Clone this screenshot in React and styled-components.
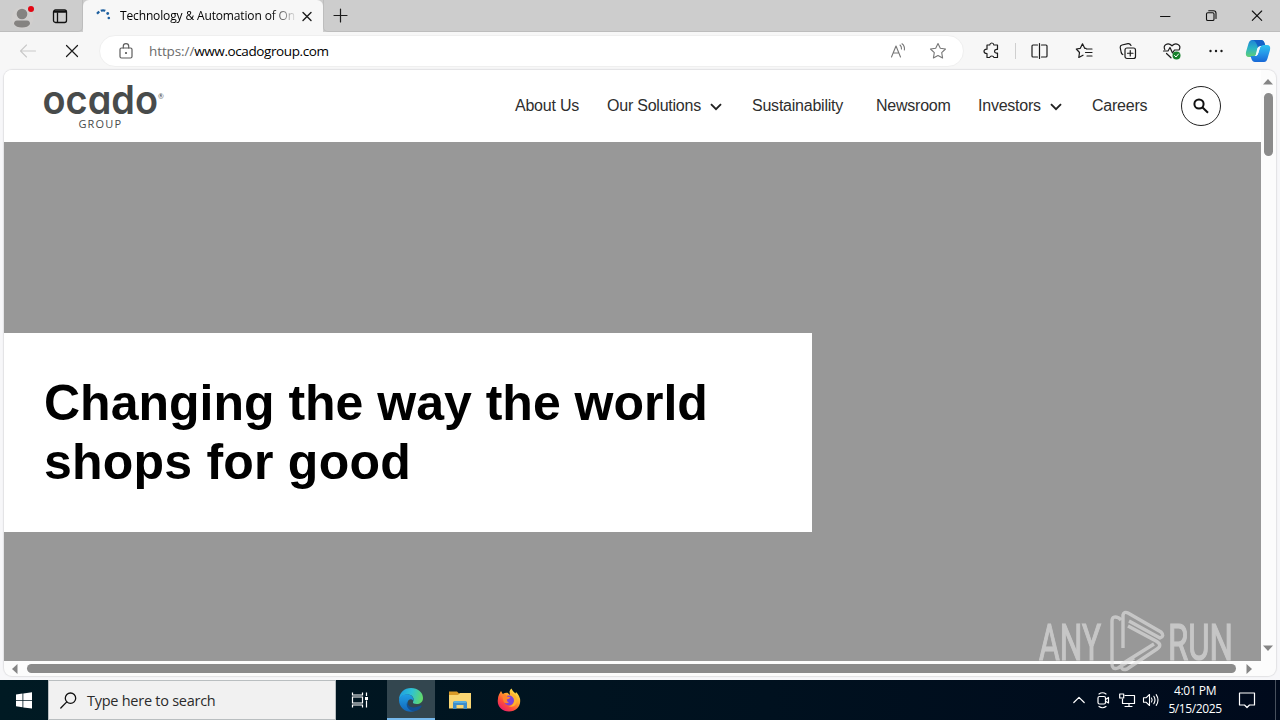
import React from "react";
import styled, { createGlobalStyle } from "styled-components";

const GlobalStyle = createGlobalStyle`
  * {
    box-sizing: border-box;
  }

  body {
    margin: 0;
    overflow: hidden;
    background: #f7f7f7;
    font-family: "Open Sans", "Noto Sans", sans-serif;
  }

  svg {
    display: block;
    flex: none;
    overflow: visible;
  }
`;

const DesktopSC = styled.div`
  width: 1280px;
  height: 720px;
  display: flex;
  flex-direction: column;
  position: relative;
  overflow: hidden;
`;

const TabStripSC = styled.div`
  height: 32px;
  display: flex;
  background: #cdcdcd;
`;

const CellSC = styled.div`
  width: ${(props) => props.$w}px;
  height: 100%;
  flex: none;
  display: flex;
  align-items: center;
  justify-content: center;
`;

const StripStartSC = styled.div`
  width: 83px;
  display: flex;
  padding-left: 3px;
  border-bottom: 1px solid #bdbdbd;
  border-right: 1px solid #bdbdbd;
  border-bottom-right-radius: 5px;
`;

const TabSC = styled.div`
  width: 240px;
  display: flex;
  align-items: center;
  padding-left: 13px;
  background: #f7f7f7;
  border-radius: 6px 6px 0 0;
`;

const TabTitleSC = styled.div`
  width: 175px;
  margin-left: 9px;
  white-space: nowrap;
  font-size: 12px;
  line-height: 20px;
  letter-spacing: -0.14px;
  color: #000;
  mask-image: linear-gradient(to right, #000 150px, transparent 178px);
`;

const StripEndSC = styled.div`
  flex: 1;
  display: flex;
  border-bottom: 1px solid #bdbdbd;
  border-left: 1px solid #bdbdbd;
  border-bottom-left-radius: 5px;
`;

const SpacerSC = styled.div`
  flex: 1;
`;

const ToolbarSC = styled.div`
  height: 38px;
  display: flex;
  align-items: center;
  padding-left: 6px;
  background: #f7f7f7;
`;

const AddressSC = styled.div`
  width: 865px;
  height: 32px;
  margin: 0 3px 0 5px;
  padding: 0 5px 0 7px;
  display: flex;
  align-items: center;
  border-radius: 16px;
  border: 1px solid #efefef;
  background: #fff;
`;

const UrlSC = styled.div`
  flex: 1;
  margin-left: 4px;
  font-size: 13.5px;
  line-height: 20px;
  letter-spacing: -0.4px;
  color: #000;

  span {
    color: #6b6b6b;
    letter-spacing: -0.1px;
  }
`;

const SeparatorSC = styled.div`
  width: 1px;
  height: 16px;
  background: #cfcfcf;
`;

const WindowBodySC = styled.div`
  height: 610px;
  padding: 0 4px 4px;
  background: #f7f7f9;
`;

const PageFrameSC = styled.div`
  height: 606px;
  display: grid;
  grid-template-columns: 1257px 15px;
  grid-template-rows: 591px 15px;
  overflow: hidden;
  border-radius: 8px;
  background: #fcfcfc;
  box-shadow: 0 0 1px 1px #e2e2e4;
`;

const SiteSC = styled.div`
  display: flex;
  flex-direction: column;
  background: #fff;
`;

const SiteHeaderSC = styled.header`
  height: 72px;
  display: flex;
  align-items: center;
  padding: 0 40px;
`;

const NavSC = styled.nav`
  flex: 1;
  display: flex;
  align-items: center;
  margin-left: 347px;
`;

const NavItemSC = styled.div`
  width: ${(props) => props.$w}px;
  flex: none;
  display: flex;
  align-items: center;
  white-space: nowrap;
  font: 16px/24px "Liberation Sans", Arial, sans-serif;
  letter-spacing: -0.23px;
  color: #2e2e2e;

  svg {
    margin-left: 9px;
    margin-top: 2px;
  }
`;

const SearchButtonSC = styled.div`
  width: 40px;
  height: 40px;
  display: flex;
  align-items: center;
  justify-content: center;
  border: 1px solid #222;
  border-radius: 50%;
`;

const HeroSC = styled.div`
  flex: 1;
  padding-top: 191px;
  background: #989898;
`;

const HeroCardSC = styled.div`
  width: 808px;
  height: 199px;
  padding: 41px 40px 0;
  background: #fff;
`;

const HeroTitleSC = styled.h1`
  margin: 0;
  font: bold 50px/59px "Liberation Sans", Arial, sans-serif;
  color: #000;

  span {
    letter-spacing: 0.22px;
  }
`;

const VerticalBarSC = styled.div`
  display: flex;
  flex-direction: column;
  align-items: center;
  justify-content: space-between;
  padding: 9px 1px 10px 0;
`;

const HorizontalBarSC = styled.div`
  display: flex;
  align-items: center;
  padding: 0 9px 0 8px;
  gap: 9px;
`;

const VerticalThumbSC = styled.div`
  width: 9px;
  height: 63px;
  margin: 8px 0 auto;
  border-radius: 5px;
  background: #8b8b8b;
`;

const HorizontalThumbSC = styled.div`
  flex: 1;
  height: 9px;
  margin-right: 1px;
  border-radius: 5px;
  background: #8b8b8b;
`;

const TaskbarSC = styled.div`
  height: 40px;
  display: flex;
  background: linear-gradient(to right, #001a23, #00111f 60%, #000a1c);
  color: #fff;
`;

const SearchBoxSC = styled.div`
  width: 288px;
  display: flex;
  align-items: center;
  padding-left: 11px;
  gap: 10px;
  background: #f1f1f1;
  border: 1px solid #b9bec0;
  color: #2b2b2b;
  font-size: 14.5px;
  letter-spacing: -0.26px;
`;

const TaskButtonSC = styled(CellSC)`
  width: 48px;
  margin-right: 1px;
  padding-top: 1px;
  background: ${(props) => (props.$active ? "#33464f" : "transparent")};
  border-bottom: 2px solid ${(props) => (props.$active ? "#76b9ed" : "transparent")};
`;

const ClockSC = styled.div`
  width: 64px;
  padding-top: 2px;
  text-align: center;
  font-size: 12px;
  line-height: 18px;
  letter-spacing: -0.4px;
  white-space: nowrap;
`;

const ShowDesktopSC = styled.div`
  width: 5px;
  border-left: 1px solid #47505d;
`;

const WatermarkSC = styled.div`
  position: absolute;
  left: 1036px;
  top: 606px;
  opacity: 0.6;
`;

const Icon = ({ size = 20, box = 20, color = "#1b1b1b", sw = 1.1, children }) => (
  <svg
    width={size}
    height={size}
    viewBox={`0 0 ${box} ${box}`}
    fill="none"
    stroke={color}
    strokeWidth={sw}
    strokeLinecap="round"
    strokeLinejoin="round"
  >
    {children}
  </svg>
);

const Arrow = ({ d, w, h }) => (
  <svg width={w} height={h} viewBox={`0 0 ${w} ${h}`}>
    <path d={d} fill="#858585" />
  </svg>
);

const Chevron = () => (
  <svg width="12" height="8" viewBox="0 0 12 8" fill="none" stroke="#222" strokeWidth="1.900">
    <path d="M1 1.200 6 6.200 11 1.200" />
  </svg>
);

const STAR = "M10 2.5 12.3 7.3 17.5 8 13.7 11.7 14.6 17 10 14.5 5.4 17 6.3 11.7 2.5 8 7.7 7.3Z";

// cv11 gives Inter its single-storey "a"
const OcadoLogo = () => (
  <svg width="124" height="50" viewBox="0 0 124 50" fill="#484b4b">
    <text
      x="-1.500"
      y="32.500"
      fontFamily="Inter"
      fontWeight="600"
      fontSize="39.500"
      textLength="115.500"
      lengthAdjust="spacingAndGlyphs"
      style={{ fontFeatureSettings: '"cv11"' }}
    >
      ocado
    </text>
    <text x="114" y="17.500" fontFamily="Lato" fontSize="7">
      ®
    </text>
    <text x="34.500" y="46.500" fontFamily="Open Sans" fontSize="11" textLength="42.500">
      GROUP
    </text>
  </svg>
);

const CopilotIcon = () => (
  <svg width="26" height="24" viewBox="0 0 26 24">
    <defs>
      <linearGradient id="cpA" x1="0" y1="0" x2="0" y2="1">
        <stop offset="0" stopColor="#1f84d6" />
        <stop offset=".5" stopColor="#2bb5c4" />
        <stop offset="1" stopColor="#62cf73" />
      </linearGradient>
      <linearGradient id="cpB" x1="0" y1="0" x2="0" y2="1">
        <stop offset="0" stopColor="#2cc3ef" />
        <stop offset=".5" stopColor="#2596e8" />
        <stop offset="1" stopColor="#1767d6" />
      </linearGradient>
    </defs>
    <path d="M7 1H16Q18.500 1 19.500 4L20.500 7H16Q13.500 7 12.700 10L11 15.500Q10.200 18 7.500 18H4Q0 18 1 13L3.500 4.500Q4.500 1 7 1Z" fill="url(#cpA)" />
    <path d="M7 1H16Q18.500 1 19.500 4L20.500 7H16Q14 7 13 9Q11 1 7 1Z" fill="#1462c7" />
    <path d="M19 23H10Q7.500 23 6.500 20L5.500 17H10Q12.500 17 13.300 14L15 8.500Q15.800 6 18.500 6H22Q26 6 25 11L22.500 19.500Q21.500 23 19 23Z" fill="url(#cpB)" />
    <path d="M12.200 9.500Q13 7 16 7H16.500Q15.300 7.500 15 8.500L13.300 14Q12.500 17 10 17H9.500Q10.600 16.500 11 15.500Z" fill="#f4fbff" />
  </svg>
);

const EdgeIcon = () => (
  <svg width="26" height="26" viewBox="0 0 26 26">
    <defs>
      <linearGradient id="edA" x1="0" y1=".3" x2="1" y2=".5">
        <stop offset="0" stopColor="#1e9de0" />
        <stop offset=".5" stopColor="#2fc2d4" />
        <stop offset="1" stopColor="#62d968" />
      </linearGradient>
      <linearGradient id="edB" x1="0" y1="0" x2="0" y2="1">
        <stop offset="0" stopColor="#209fe5" />
        <stop offset="1" stopColor="#1265b9" />
      </linearGradient>
    </defs>
    <path d="M1 13C1 5.500 6.500 1 13 1C20 1 25 5.500 25 11C25 15 22 17 18.700 17C16 17 14.500 16 15 15C16 13.700 16.300 9 11.500 7.800C7 6.700 2.500 9 1 13Z" fill="url(#edA)" />
    <path d="M1 13C1.500 9.500 5 7 9 7.200C14 7.500 16 11 15.500 14C14 11.500 11 11.500 9.800 14.500C8.500 19 12 24 17.500 23.800C10 27 1 22 1 13Z" fill="url(#edB)" />
    <path d="M9.500 14.500C9 19.500 14.500 22.500 22.800 18.600C24 18 23.800 19.200 23.200 20C21 23.300 18.500 24.200 15.500 24.200C10 23.500 7.200 18 9.500 14.500Z" fill="#124f92" />
  </svg>
);

const FolderIcon = () => (
  <svg width="22" height="20" viewBox="0 0 22 20">
    <path d="M0 1.500H8L10 3.500H21V8H0Z" fill="#d99a27" />
    <path d="M0 5H9L11 3H22V18.500H0Z" fill="#f9d673" />
    <path d="M4 19V13Q4 11 6 11H16Q18 11 18 13V19H14.500V15H7.500V19Z" fill="#3d8ecb" />
    <path d="M5 11H17V13H5Z" fill="#58afe0" />
  </svg>
);

const FirefoxIcon = () => (
  <svg width="24" height="24" viewBox="0 0 24 24">
    <defs>
      <linearGradient id="ffA" x1=".85" y1=".05" x2=".2" y2=".95">
        <stop offset="0" stopColor="#ffe94a" />
        <stop offset=".4" stopColor="#ffa22c" />
        <stop offset=".7" stopColor="#ff5038" />
        <stop offset="1" stopColor="#e91d6a" />
      </linearGradient>
    </defs>
    <path d="M2 6.500L4 3L5.800 6Q8 4.500 10.500 4.800L13 7L12.500 3.500Q13 1.500 14.500 .5Q15.500 3.500 18.500 5.500L19 4Q23.200 8 23.200 13C23.200 19 18.500 23.500 12 23.500C5.500 23.500 .7 19 .7 13Q.7 9 2 6.500Z" fill="url(#ffA)" />
    <circle cx="12" cy="12.500" r="5" fill="#7c43d9" />
    <path d="M5.800 6Q9 6 10.500 8.700L13.500 9.200Q12.500 11 10 11.200Q9.500 13.500 12 14.500Q9.500 16 7 14.500Q5 10 5.800 6Z" fill="#ff842c" />
    <path d="M13 6Q18 8 17 14Q15.500 18.500 10.500 17.800Q18.500 21 20 13Q20 7.500 14.500 5Z" fill="#ffb12d" />
  </svg>
);

const AnyRunMark = () => (
  <svg width="200" height="70" viewBox="0 0 200 70" fill="#e6e6e6">
    <g fontFamily="Roboto" fontSize="50" stroke="#e6e6e6" strokeWidth="1.200">
      <text x="3" y="53.500" textLength="62" lengthAdjust="spacingAndGlyphs">
        ANY
      </text>
      <text x="132" y="53.500" textLength="65" lengthAdjust="spacingAndGlyphs">
        RUN
      </text>
    </g>
    <path
      d="M85 14 83 12Q76 9 76 15V58Q76 64 82 62L98 52M87 42V9Q88 5 92 7L125 26Q129 30 124 32L93 15M92 20 120 35Q127 39 121 43L91 63Q84 65 86 58L118 38"
      fill="none"
      stroke="#e6e6e6"
      strokeWidth="3.400"
      strokeLinejoin="round"
    />
  </svg>
);

const TabStrip = () => (
  <TabStripSC>
    <StripStartSC>
      <CellSC $w={40}>
        <svg width="24" height="28" viewBox="0 0 24 28">
          <circle cx="11.500" cy="16" r="11" fill="#d1cfce" />
          <circle cx="11" cy="12" r="5.300" fill="#858381" />
          <path d="M3 22Q3 18.500 6 18.500H16Q19 18.500 19 22Q17 25.500 11 25.500T3 22Z" fill="#858381" />
          <circle cx="20" cy="7" r="3" fill="#e30613" />
        </svg>
      </CellSC>
      <CellSC $w={34}>
        <Icon size={16} box={16} color="#111" sw={1.3}>
          <rect x="1.500" y="2" width="13" height="12.500" rx="2" />
          <path d="M2.500 3.800H13.500" strokeWidth="2" />
          <path d="M5.500 5V14" />
        </Icon>
      </CellSC>
    </StripStartSC>
    <TabSC>
      <svg width="15" height="15" viewBox="0 0 15 15" fill="none" stroke="#1d5f9f" strokeWidth="2.300">
        <path d="M1 4.800 3.200 2.500M4.800 1.800Q7 .8 9.300 1.800" />
        <g fill="#1d5f9f" stroke="none">
          <circle cx="11.700" cy="4.500" r="1.400" />
          <circle cx="12.800" cy="9" r="1.300" />
        </g>
      </svg>
      <TabTitleSC>Technology &amp; Automation of On</TabTitleSC>
      <CellSC $w={24}>
        <Icon size={10} box={10} sw={1.4}>
          <path d="M1 1.500 9 9.500M9 1.500 1 9.500" />
        </Icon>
      </CellSC>
    </TabSC>
    <StripEndSC>
      <CellSC $w={33}>
        <Icon size={15} box={15} sw={1.2}>
          <path d="M7.500 1V14M1 7.500H14" />
        </Icon>
      </CellSC>
      <SpacerSC />
      <CellSC $w={46}>
        <Icon size={11} box={11} color="#111" sw={1}>
          <path d="M.5 6.500H10" />
        </Icon>
      </CellSC>
      <CellSC $w={46}>
        <Icon size={11} box={11} color="#111" sw={1.1}>
          <rect x=".5" y="2.800" width="7.500" height="7.700" rx="1.300" />
          <path d="M2.700 .8H7.500Q10 .8 10 3.200V8.500" />
        </Icon>
      </CellSC>
      <CellSC $w={46}>
        <Icon size={11} box={11} color="#111" sw={1.1}>
          <path d="M.3 1 9.700 10.400M9.700 1 .3 10.400" />
        </Icon>
      </CellSC>
    </StripEndSC>
  </TabStripSC>
);

const Toolbar = () => (
  <ToolbarSC>
    <CellSC $w={44}>
      <Icon color="#c9c9c9">
        <path d="M17.500 10H2.500M8.500 4 2.500 10 8.500 16" />
      </Icon>
    </CellSC>
    <CellSC $w={44}>
      <Icon size={14} box={14} sw={1.2}>
        <path d="M1.500 1.500 12.500 12.500M12.500 1.500 1.500 12.500" />
      </Icon>
    </CellSC>
    <AddressSC>
      <CellSC $w={38}>
        <Icon color="#5d5d5d" sw={1.2}>
          <rect x="4" y="7" width="12" height="10" rx="1.500" />
          <path d="M7.300 7V5.300A2.700 2.700 0 0 1 12.700 5.300V7" />
          <circle cx="10" cy="12" r=".5" fill="#5d5d5d" />
        </Icon>
      </CellSC>
      <UrlSC>
        <span>https://</span>www.ocadogroup.com
      </UrlSC>
      <CellSC $w={40}>
        <Icon color="#777" sw={1.1}>
          <path d="M3.500 16 8 5 12.500 16M5.100 12H10.900" />
          <path d="M12 4Q13.700 5.500 13.500 8M14 2.800Q17 5 16.400 9" />
        </Icon>
      </CellSC>
      <CellSC $w={40}>
        <Icon color="#777">
          <path d={STAR} />
        </Icon>
      </CellSC>
    </AddressSC>
    <CellSC $w={48}>
      <Icon sw={1.2}>
        <path d="M6 4H8.700Q9 2 10.800 2T12.900 4H16.500V8.300H15.500Q13.500 8.500 13.500 10.200T15.500 12.100H16.500V16.500H12.900Q12.600 15 10.800 15T8.700 16.500H6V12.500Q3 12.500 3 10.300T6 8.200Z" />
      </Icon>
    </CellSC>
    <SeparatorSC />
    <CellSC $w={46}>
      <Icon sw={1.2}>
        <path d="M8.500 4H4Q3 4 3 5V15Q3 16 4 16H8.500M12.500 4H17Q18 4 18 5V15Q18 16 17 16H12.500M10.500 2.500V17.500" />
      </Icon>
    </CellSC>
    <CellSC $w={44}>
      <Icon sw={1.2}>
        <path d="M12 7.300H10.700L8.500 2.800 6.300 7.300 2.300 8 5.500 11.500 4.800 16.500 9 14.200M12.500 8H18M11.500 11.500H18M13 15H18" />
      </Icon>
    </CellSC>
    <CellSC $w={44}>
      <Icon sw={1.2}>
        <rect x="7" y="7" width="10.500" height="10.500" rx="2" />
        <path d="M12.250 9.500V15M9.500 12.250H15M4.800 13.500Q3.500 12.800 3.200 11.500L2.200 6.500Q2 4.500 4 4L10 2.600Q12 2.300 13 4.500" />
      </Icon>
    </CellSC>
    <CellSC $w={44}>
      <Icon sw={1.2}>
        <path d="M2.800 8.500C.3 4 6 1 10 4.800C14 1 19.500 4 17.300 8.500M1.500 10H6L8 6.500 10.500 12 12.500 9H17M4.500 12.500 9 16.800" />
        <circle cx="14.500" cy="14.500" r="4" fill="#16802b" stroke="none" />
        <path d="M12.500 14.500 14 16 16.500 13" stroke="#fff" strokeWidth="1" />
      </Icon>
    </CellSC>
    <CellSC $w={44}>
      <Icon>
        <g fill="#1b1b1b" stroke="none">
          <circle cx="4.500" cy="10" r="1.200" />
          <circle cx="10" cy="10" r="1.200" />
          <circle cx="15.500" cy="10" r="1.200" />
        </g>
      </Icon>
    </CellSC>
    <CellSC $w={40}>
      <CopilotIcon />
    </CellSC>
  </ToolbarSC>
);

const Site = () => (
  <SiteSC>
    <SiteHeaderSC>
      <OcadoLogo />
      <NavSC>
        <NavItemSC $w={92}>About Us</NavItemSC>
        <NavItemSC $w={145}>
          Our Solutions <Chevron />
        </NavItemSC>
        <NavItemSC $w={124}>Sustainability</NavItemSC>
        <NavItemSC $w={102}>Newsroom</NavItemSC>
        <NavItemSC $w={114}>
          Investors <Chevron />
        </NavItemSC>
        <NavItemSC $w={57}>Careers</NavItemSC>
      </NavSC>
      <SearchButtonSC>
        <svg width="16" height="16" viewBox="0 0 16 16" fill="none" stroke="#111" strokeWidth="2">
          <circle cx="6" cy="6" r="4.600" />
          <path d="M9.300 9.300 15 14.800" />
        </svg>
      </SearchButtonSC>
    </SiteHeaderSC>
    <HeroSC>
      <HeroCardSC>
        <HeroTitleSC>
          Changing the way the world
          <br />
          <span>shops for good</span>
        </HeroTitleSC>
      </HeroCardSC>
    </HeroSC>
  </SiteSC>
);

const Taskbar = () => (
  <TaskbarSC>
    <CellSC $w={48}>
      <svg width="16" height="17" viewBox="0 0 16 17" fill="#fff">
        <path d="M0 2.500 6.500 1.600V8H0ZM7.300 1.500 16 .2V8H7.300ZM0 8.800H6.500V15.200L0 14.300ZM7.300 8.800H16V16.600L7.300 15.400Z" />
      </svg>
    </CellSC>
    <SearchBoxSC>
      <Icon size={17} box={17} color="#111" sw={1.3}>
        <circle cx="10.500" cy="6.200" r="5.200" />
        <path d="M6.800 9.900 .8 16" />
      </Icon>
      Type here to search
    </SearchBoxSC>
    <CellSC $w={51}>
      <svg width="21" height="16" viewBox="0 0 21 16" fill="none" stroke="#fff" strokeWidth="1.200">
        <path d="M1.500 .5V3H11.500V.5M1.500 15.500V13H11.500V15.500M1.500 5H11.500V11H1.500ZM15.500 .5V4M15.500 8.500V15.500" />
        <path d="M14 5H17V8H14Z" fill="#fff" stroke="none" />
      </svg>
    </CellSC>
    <TaskButtonSC $active>
      <EdgeIcon />
    </TaskButtonSC>
    <TaskButtonSC>
      <FolderIcon />
    </TaskButtonSC>
    <TaskButtonSC>
      <FirefoxIcon />
    </TaskButtonSC>
    <SpacerSC />
    <CellSC $w={24}>
      <Icon size={12} box={12} color="#fff" sw={1.2}>
        <path d="M.8 8.500 6 3.300 11.200 8.500" />
      </Icon>
    </CellSC>
    <CellSC $w={24}>
      <Icon size={16} box={16} color="#fff" sw={1.2}>
        <rect x="3" y="4.500" width="7.500" height="7.500" rx="1.500" />
        <path d="M10.500 7.500 13.500 5.500V11L10.500 9.200M4 2Q7.500-.5 11 2M4 14.500Q7.500 17 11 14.500" />
      </Icon>
    </CellSC>
    <CellSC $w={24}>
      <Icon size={16} box={16} color="#fff" sw={1.2}>
        <path d="M6 3.500H15.500V11.500H3.500V7M10 11.500V14.500M6 14.500H13" />
        <rect x=".7" y="2" width="4" height="4" />
      </Icon>
    </CellSC>
    <CellSC $w={24}>
      <Icon size={16} box={16} color="#fff" sw={1.1}>
        <path d="M.5 5.800H3L6.500 2.500V13.500L3 10.200H.5ZM8.500 6Q9.800 8 8.500 10M10.800 4.300Q13.200 8 10.800 11.700M13.200 2.600Q16.800 8 13.200 13.400" />
      </Icon>
    </CellSC>
    <ClockSC>
      4:01 PM
      <br />
      5/15/2025
    </ClockSC>
    <CellSC $w={40}>
      <Icon size={18} box={18} color="#fff" sw={1.2}>
        <path d="M1.500 2H16.500V14H11.500L9 16.500 6.500 14H1.500Z" />
      </Icon>
    </CellSC>
    <CellSC $w={8} />
    <ShowDesktopSC />
  </TaskbarSC>
);

export default () => {
  return (
    <DesktopSC>
      <GlobalStyle />
      <TabStrip />
      <Toolbar />
      <WindowBodySC>
        <PageFrameSC>
          <Site />
          <VerticalBarSC>
            <Arrow w={10} h={6} d="M0 5.500 5 0 10 5.500Z" />
            <VerticalThumbSC />
            <Arrow w={10} h={6} d="M0 .5 5 6 10 .5Z" />
          </VerticalBarSC>
          <HorizontalBarSC>
            <Arrow w={6} h={10} d="M5.500 0 0 5 5.500 10Z" />
            <HorizontalThumbSC />
            <Arrow w={6} h={10} d="M.5 0 6 5 .5 10Z" />
          </HorizontalBarSC>
        </PageFrameSC>
      </WindowBodySC>
      <Taskbar />
      <WatermarkSC>
        <AnyRunMark />
      </WatermarkSC>
    </DesktopSC>
  );
};
